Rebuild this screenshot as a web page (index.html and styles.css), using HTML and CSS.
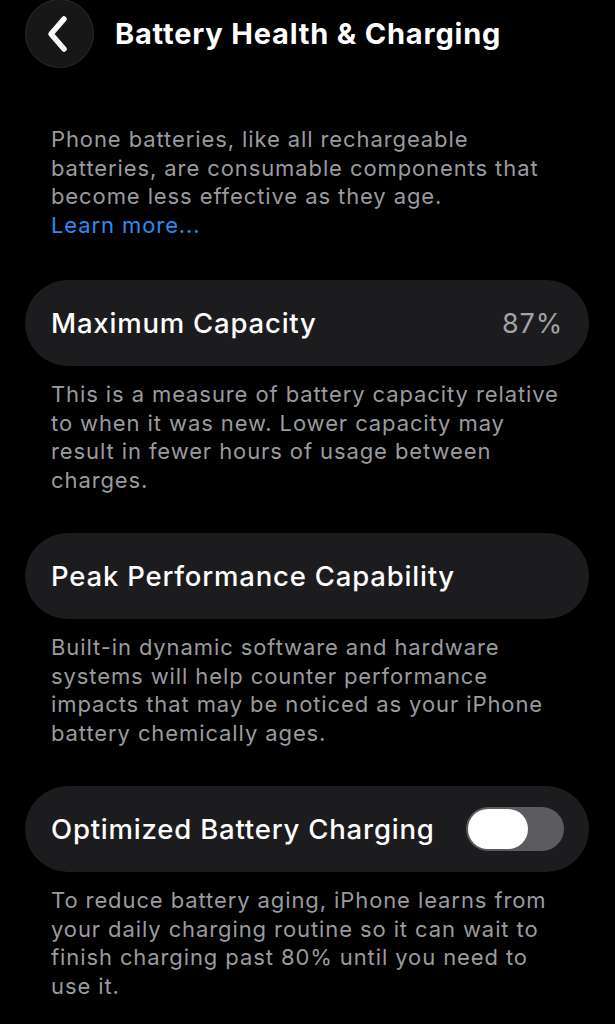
FILE: index.html
```html
<!DOCTYPE html>
<html lang="en">
<head>
    <meta charset="UTF-8">
    <meta name="viewport" content="width=device-width, initial-scale=1.0">
    <title>Battery Health &amp; Charging</title>
    <link rel="stylesheet" href="styles.css">
</head>
<body>
    <div class="screen">
        <div class="nav-bar">
            <button class="back-button" aria-label="Back">
                <svg width="26" height="38" viewBox="0 0 26 38">
                    <path d="M20 4 L7 19 L20 34" fill="none" stroke="#fff" stroke-width="5.5" stroke-linecap="round" stroke-linejoin="round"/>
                </svg>
            </button>
            <h1>Battery Health &amp; Charging</h1>
        </div>

        <p class="intro">
            Phone batteries, like all rechargeable batteries, are consumable components that become less effective as they age.
            <br><a href="#" class="link">Learn more...</a>
        </p>

        <div class="cell">
            <span class="cell-title">Maximum Capacity</span>
            <span class="cell-value">87%</span>
        </div>
        <p class="footnote">This is a measure of battery capacity relative to when it was new. Lower capacity may result in fewer hours of usage between charges.</p>

        <div class="cell">
            <span class="cell-title">Peak Performance Capability</span>
        </div>
        <p class="footnote">Built-in dynamic software and hardware systems will help counter performance impacts that may be noticed as your iPhone battery chemically ages.</p>

        <div class="cell">
            <span class="cell-title">Optimized Battery Charging</span>
            <div class="toggle">
                <div class="toggle-knob"></div>
            </div>
        </div>
        <p class="footnote">To reduce battery aging, iPhone learns from your daily charging routine so it can wait to finish charging past 80% until you need to use it.</p>
    </div>
</body>
</html>
```

FILE: styles.css
```css
body {
    margin: 0;
    padding: 0;
    background-color: #000;
    font-family: Inter, "Noto Sans", sans-serif;
    color: #fff;
}

.screen {
    width: 615px;
    padding: 0 26px 0 25px;
    box-sizing: border-box;
}

.nav-bar {
    display: flex;
    align-items: center;
    height: 69px;
    margin-top: -1px;
}

.back-button {
    width: 69px;
    height: 69px;
    border-radius: 50%;
    background: #171717;
    border: 1px solid #2a2a2a;
    display: flex;
    align-items: center;
    justify-content: center;
    padding: 0 5px 0 0;
    flex-shrink: 0;
}

.nav-bar h1 {
    margin: 0 0 0 21px;
    font-size: 29px;
    font-weight: 700;
    letter-spacing: 0.8px;
}

.intro,
.footnote {
    margin: 0;
    padding: 0 26px;
    font-size: 22px;
    line-height: 28.5px;
    letter-spacing: 0.9px;
    color: #9a9a9f;
}

.intro {
    margin-top: 57px;
    margin-bottom: 41px;
}

.link {
    color: #2f8af2;
    text-decoration: none;
}

.footnote {
    margin-top: 14px;
    margin-bottom: 39px;
}

.cell {
    display: flex;
    align-items: center;
    justify-content: space-between;
    height: 86px;
    padding: 0 26px;
    background: #1c1c1e;
    border-radius: 43px;
}

.cell-title {
    font-size: 27.5px;
    font-weight: 500;
    letter-spacing: 0.8px;
}

.cell-value {
    font-size: 27px;
    letter-spacing: 0.8px;
    color: #a2a2a7;
}

.toggle {
    width: 98px;
    height: 44px;
    border-radius: 22px;
    background: #5b5b60;
    margin-right: -1px;
    position: relative;
}

.toggle-knob {
    position: absolute;
    left: 2px;
    top: 2px;
    width: 60px;
    height: 40px;
    border-radius: 20px;
    background: #fff;
}
```
